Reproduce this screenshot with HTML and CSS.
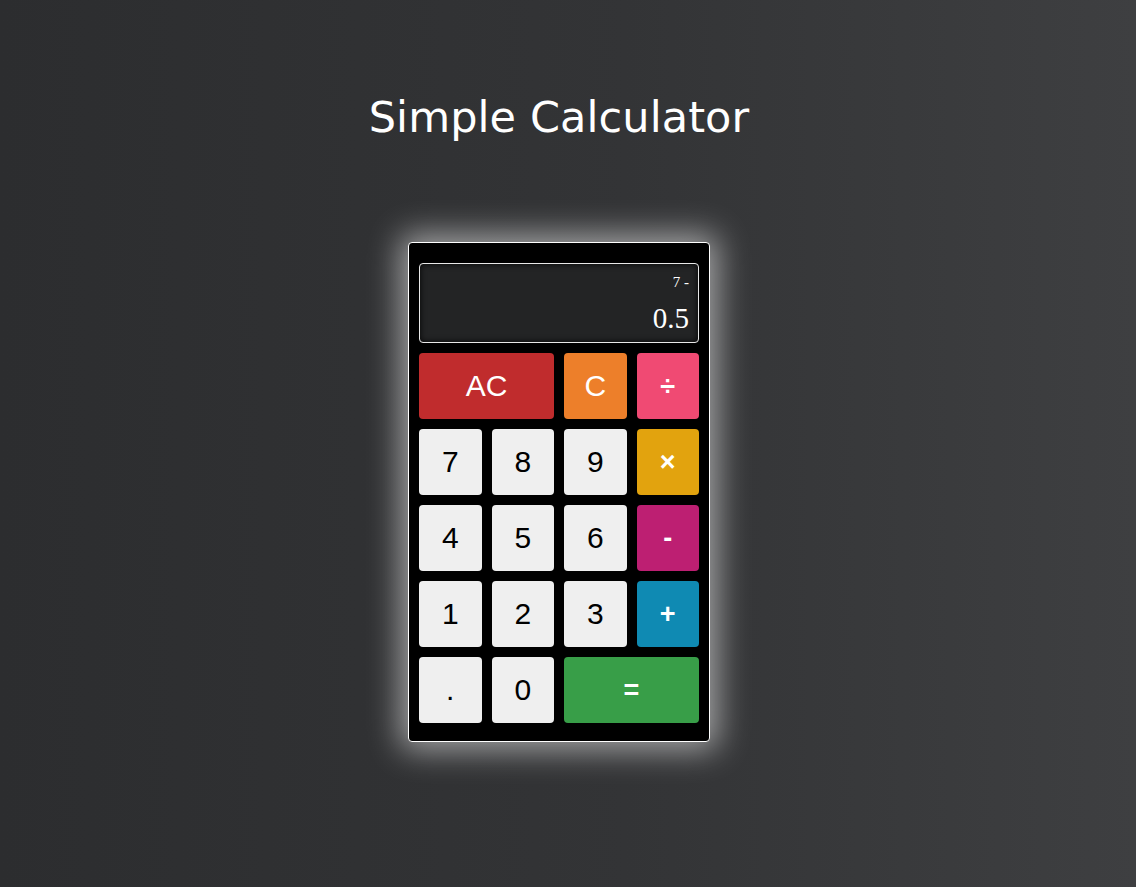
FILE: index.html
```html
<!DOCTYPE html>
<html>
<head>
<meta charset="utf-8">
<link rel="stylesheet" href="styles.css">
</head>
<body>
<main class="page">
  <h1 class="title">Simple Calculator</h1>
  <div class="calc">
    <div class="display">
      <div class="prev">7 -</div>
      <div class="curr">0.5</div>
    </div>
    <div class="keys">
      <button class="key wide ac">AC</button>
      <button class="key c">C</button>
      <button class="key op div">÷</button>
      <button class="key num">7</button>
      <button class="key num">8</button>
      <button class="key num">9</button>
      <button class="key op mul">×</button>
      <button class="key num">4</button>
      <button class="key num">5</button>
      <button class="key num">6</button>
      <button class="key op sub">-</button>
      <button class="key num">1</button>
      <button class="key num">2</button>
      <button class="key num">3</button>
      <button class="key op add">+</button>
      <button class="key num">.</button>
      <button class="key num">0</button>
      <button class="key op wide eq">=</button>
    </div>
  </div>
</main>
</body>
</html>
```

FILE: styles.css
```css
html, body {
  margin: 0;
  height: 100%;
}
body {
  background: linear-gradient(90deg, #2c2d2f 0%, #333436 55%, #3e3f41 100%);
  font-family: "DejaVu Sans", sans-serif;
}
.page {
  display: flex;
  flex-direction: column;
  align-items: center;
  padding-right: 18px;
}
.title {
  margin: 87px 0 0;
  font-family: "DejaVu Sans", sans-serif;
  font-weight: normal;
  font-size: 43px;
  line-height: 60px;
  color: #ffffff;
  letter-spacing: 0.1px;
}
.calc {
  margin-top: 95px;
  width: 280px;
  padding: 20px 10px 18px;
  background: #000;
  border: 1px solid #ffffff;
  border-radius: 4px;
  box-shadow: 0 0 32px 8px rgba(255, 255, 255, 0.55);
}
.display {
  box-sizing: border-box;
  height: 80px;
  background: #232425;
  border: 1px solid #e8e8e8;
  border-radius: 4px;
  box-shadow: inset 0 0 6px rgba(0, 0, 0, 0.9);
  padding: 7px 9px 0 10px;
  text-align: right;
  color: #ffffff;
  font-family: "Liberation Serif", serif;
}
.prev {
  font-size: 15px;
  line-height: 22px;
}
.curr {
  font-size: 29px;
  line-height: 30px;
  margin-top: 10px;
}
.keys {
  margin-top: 10px;
  display: grid;
  grid-template-columns: repeat(4, 1fr);
  grid-auto-rows: 66px;
  gap: 10px;
}
.key {
  border: none;
  border-radius: 4px;
  font-family: "Liberation Sans", Arial, sans-serif;
  font-size: 30px;
  color: #ffffff;
  padding: 0;
  cursor: pointer;
}
.wide {
  grid-column: span 2;
}
.num {
  background: #efefef;
  color: #000;
}
.op {
  font-weight: bold;
  font-size: 27px;
}
.ac { background: #c02c2d; }
.c { background: #ed7f2a; }
.div { background: #f04a73; }
.mul { background: #e2a30e; }
.sub { background: #bd1f72; }
.add { background: #0f8ab3; }
.eq { background: #389e48; }
```
